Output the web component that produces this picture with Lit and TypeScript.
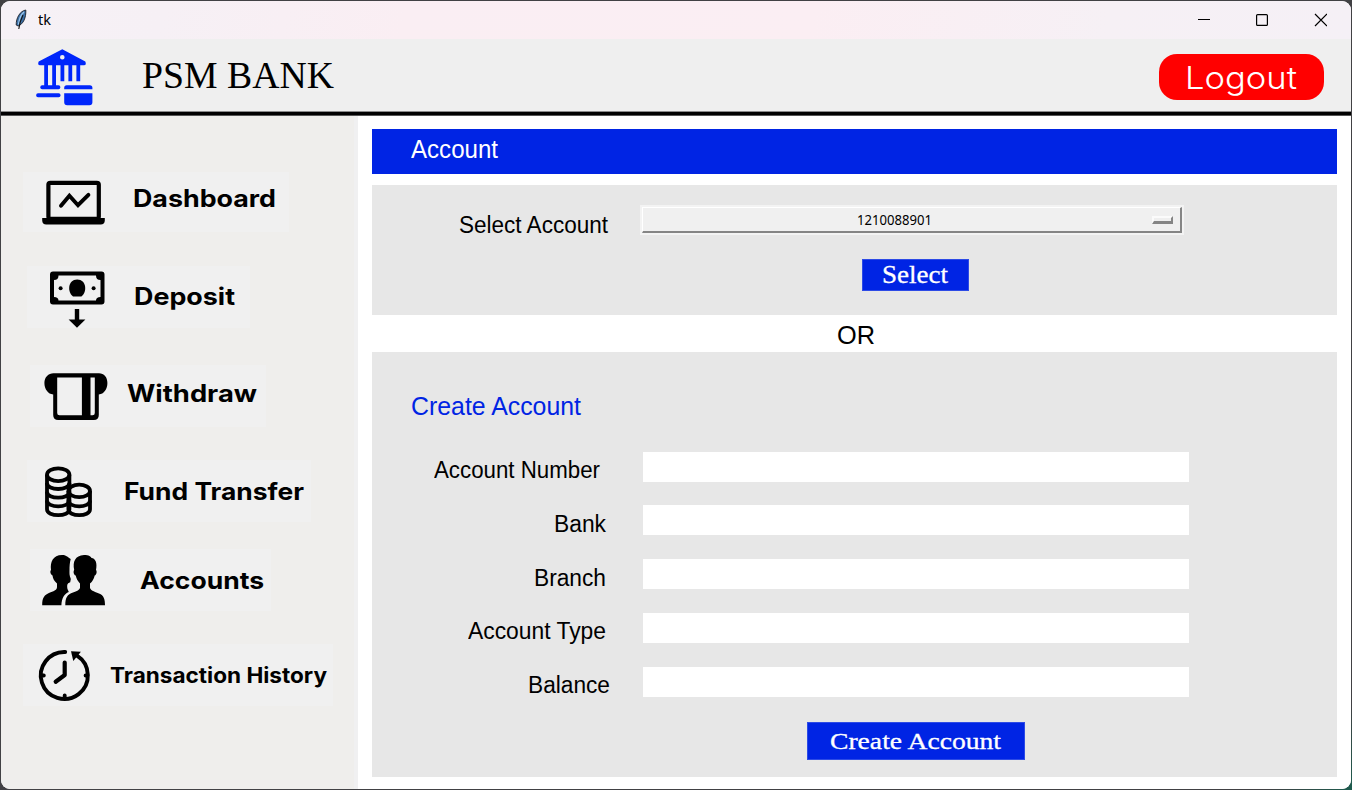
import { LitElement, html, svg, css } from "lit";
import { customElement, property } from "lit/decorators.js";

/* A single line of text, condensed or widened to an exact width. */
@customElement("fit-text")
class FitText extends LitElement {
  @property({ type: Number }) span = 0;
  static styles = css`
    :host { display: block; flex: none; white-space: nowrap; }
    .line { display: inline-block; transform-origin: 0 50%; }
  `;
  firstUpdated() {
    const line = this.renderRoot.querySelector(".line") as HTMLElement;
    const natural = line.getBoundingClientRect().width;
    this.style.width = this.span + "px";
    if (natural) line.style.transform = `scaleX(${this.span / natural})`;
  }
  render() {
    return html`<span class="line"><slot></slot></span>`;
  }
}

const icons: Record<string, any> = {
  dashboard: svg`
    <rect x="48.4" y="182.8" width="50.4" height="36" rx="2" fill="none" stroke="#000" stroke-width="4.2"/>
    <path d="M42.2 218h27.3c.6 1.300 1.400 1.600 2.600 1.600h4.600c1.200 0 2-.3 2.600-1.600h25.500v2.400c0 2.400-1.600 4-4 4H46.200c-2.400 0-4-1.600-4-4z"/>
    <path d="M61 205.800l8.400-10 8.600 9.400 10.400-10.400" fill="none" stroke="#000" stroke-width="3.900" stroke-linecap="round"/>`,
  deposit: svg`
    <path fill-rule="evenodd" d="M53 271.500h48.500q3 0 3 3v27q0 3-3 3H53q-3 0-3-3v-27q0-3 3-3zM58.500 275.500q0 4.500-4.500 4.500v17q4.500 0 4.500 3.500h37.500q0-3.500 4.500-3.500v-17q-4.500 0-4.500-4.500z"/>
    <circle cx="60.600" cy="288.200" r="2"/><circle cx="93.600" cy="288.200" r="2"/>
    <path d="M73 296.500c-6-4.500-5.200-17 4.200-17s10.200 12.500 4.200 17z"/>
    <path d="M74.800 309h4.400v10.400h6.200l-8.400 8.400-8.400-8.400h6.200z"/>`,
  withdraw: svg`
    <path fill-rule="evenodd" d="M53.500 373.200h45.500c5 0 8.400 3.800 8.400 9.800s-3.400 11.200-8.600 11.400v20.600q0 5-5 5H58.200q-5 0-5-5v-20.600c-5.200-.2-8.800-5.400-8.800-11.400s4-9.800 9.100-9.800zM57.200 377.500v35.500q0 2.200 2.200 2.200h22.500v-37.700zM90.500 377.500v37.700h2q2.300 0 2.300-2.200v-35.500z"/>`,
  fund: svg`
    <g fill="none" stroke="#000" stroke-width="3.800">
      <ellipse cx="58.200" cy="474.700" rx="11.200" ry="6.400"/>
      <path d="M47 474.700v34.500c0 8 22.400 8 22.400 0v-34.500"/>
      <path d="M47 483c0 8 22.400 8 22.400 0M47 491.700c0 8 22.400 8 22.400 0M47 500.400c0 8 22.400 8 22.400 0"/>
      <ellipse cx="79.200" cy="490.900" rx="10.800" ry="6.200"/>
      <path d="M68.400 491v18.200c0 8 21.600 8 21.600 0V491"/>
      <path d="M68.400 500.400c0 8 21.600 8 21.600 0"/>
    </g>`,
  accounts: svg`
    <path d="M65.300 605.300c0-8 2-10.800 7.700-12.800 4-1.500 6.500-2.500 7-4.500v-4.500c-2.500-2.500-3.500-5-4.300-8-2.200-.5-2.600-4.500-1.500-5.500-1.700-8 .8-14.500 9.800-15 5 0 7 1.500 7.500 3 4 .5 6 5 4.500 12 1.200 1 .7 5-1.300 5.500-.9 3.500-2.200 6-4.700 8v4.500c1 3 6 4 9 5.500 5 2 6 5.800 6 11.800z"/>
    <path d="M42.200 605.300c0-7.800 2-10.300 7.800-12.800 4-1.500 7-2.500 7-5.500v-3.500c-3-2.500-4-5-4.500-8-2.500-1.500-2.500-4.500-1.500-5.500-1-8 2-15 11-15 4 0 5.500 2 8.700 4-1 4-1.200 7-1.200 11 0 3-.3 5 1.300 9l-.6 3.200c-3.500.8-3.200 3.800-2.700 6.800l1.300 3c-4.800 2-7 6-7.400 13.300z"/>`,
  history: svg`
    <g fill="none" stroke="#000" stroke-width="3.900" stroke-linecap="round">
      <path d="M65.200 652A23.500 23.500 0 1 0 77 655.700"/>
      <path d="M64.700 662.500v12.500l-9 6.800" stroke-width="4.200" stroke-linejoin="round"/>
      <path d="M42 675.500h1.800M85.600 675.500h1.800M64.700 697v-1.500"/>
    </g>
    <path d="M71 651.300l9.900.4-7.600 9.300z"/>`,
};

const menu = [
  { id: "dashboard", text: "Dashboard", box: "23 172 110 60", span: 143 },
  { id: "deposit", text: "Deposit", box: "27 266 107 62", span: 101 },
  { id: "withdraw", text: "Withdraw", box: "30 365 97 62", span: 130 },
  { id: "fund", text: "Fund Transfer", box: "27 460 97 62", span: 180 },
  { id: "accounts", text: "Accounts", box: "30 549 110 62", span: 124 },
  { id: "history", text: "Transaction History", box: "23 644 87 62", span: 217 },
];

const fields = [
  { id: "number", text: "Account Number", span: 166 },
  { id: "bank", text: "Bank", span: 52 },
  { id: "branch", text: "Branch", span: 72 },
  { id: "type", text: "Account Type", span: 138 },
  { id: "balance", text: "Balance", span: 82 },
];

@customElement("app-root")
class AppRoot extends LitElement {
  static styles = css`
    :host { display: block; height: 790px; font-family: "Liberation Sans", sans-serif; color: #000; }
    * { box-sizing: border-box; }
    .backdrop { height: 790px; padding: 1px; background: linear-gradient(135deg, #414144 96%, #1d5c4e 100%); }
    .window { width: 1350px; height: 788px; border-radius: 9px; overflow: hidden; background: #fff; display: flex; flex-direction: column; }
    .titlebar { height: 38px; flex: none; display: flex; align-items: center; padding: 0 24px 0 12px; background: linear-gradient(100deg, #f6f1f6 0%, #f6f0f5 12%, #faeef3 30%, #fbeef3 60%, #f6f0f5 82%, #f5f0f6 100%); }
    .feather { width: 16px; height: 22px; }
    .title { font: 14px/18px "Noto Sans", sans-serif; margin: -1px auto 0 9px; }
    .controls { width: 134px; height: 20px; }
    .header { height: 77px; flex: none; display: flex; align-items: flex-start; background: linear-gradient(#efefef 72px, #8a8a8a 72px, #8a8a8a 73px, #000 73px, #000 76px, #555 76px); padding-left: 33px; }
    .logo { width: 65px; height: 70px; flex: none; }
    .brand { font: 38px/50px "Liberation Serif", serif; margin: 11px auto 0 43px; }
    .logout { width: 165px; height: 46px; margin: 15px 27.500px 0 0; padding: 0 0 0 26px; border: 0; border-radius: 18px; background: #f00; color: #fff; font: 300 31px/48px Inter, sans-serif; text-align: left; }
    .body { flex: 1; display: flex; min-height: 0; }
    .sidebar { width: 357px; flex: none; background: #efeeec; border-right: 4px solid #f0f0f1; display: flex; flex-direction: column; align-items: flex-start; padding-top: 56px; }
    .item { height: 62px; display: flex; background: #f0f0f0; font: 700 24px/28px Inter, sans-serif; flex: none; }
    .item svg { flex: none; }
    .dashboard { width: 266px; height: 60px; margin: 0 0 34px 22px; }
    .dashboard .caption { margin-top: 13px; }
    .deposit { width: 223px; margin: 0 0 37px 26px; }
    .deposit .caption { margin-top: 17px; }
    .withdraw { width: 236px; margin: 0 0 33px 29px; }
    .withdraw .caption { margin-top: 15px; }
    .fund { width: 284px; margin: 0 0 27px 26px; }
    .fund .caption { margin-top: 18px; }
    .accounts { width: 241px; margin: 0 0 33px 29px; }
    .accounts .caption { margin-top: 18px; }
    .history { width: 310px; margin: 0 0 0 22px; font-size: 21px; }
    .history .caption { margin-top: 18px; }
    .main { flex: 1; background: #fff; padding: 13px 14px 0 14px; display: flex; flex-direction: column; }
    .banner { height: 45px; flex: none; background: #0024e4; color: #fff; padding-left: 39px; font-size: 26px; line-height: 40px; }
    .pick { height: 130px; flex: none; margin-top: 11px; background: #e7e7e7; display: flex; flex-direction: column; }
    .pickrow { display: flex; padding-left: 87px; height: 50px; }
    .label { font-size: 23px; line-height: 30px; }
    .pick .label { margin-top: 25px; }
    .dropdown { width: 544px; height: 30px; margin: 20px 0 0 32px; padding: 2px; background: #f3f3f3; }
    .face { height: 26px; display: flex; align-items: center; background: #f0f0f0; border: solid; border-width: 1px 2px 2px 1px; border-color: #fff #858585 #858585 #fff; padding: 0 7px 0 214px; font: 15px/22px "Noto Sans", sans-serif; }
    .value { margin: -2px auto 0 0; }
    .knob { width: 21px; height: 8px; border: solid; border-width: 2px 2px 3px; border-color: #fbfbfb #858585 #858585 #fbfbfb; background: #efefef; }
    .action { border: 1px solid #2d4be6; background: #0024e4; color: #fff; font: 25px/30px "Liberation Serif", serif; padding: 0; text-align: left; -webkit-text-stroke: .3px #fff; }
    .select { width: 107px; height: 32px; margin: 24px 0 0 489.500px; padding-left: 19px; }
    .or { height: 37px; flex: none; padding-left: 465px; font-size: 26px; line-height: 40px; }
    .create { height: 425px; flex: none; background: #e7e7e7; }
    .subtitle { padding: 36px 0 0 39px; height: 99.500px; font-size: 26px; line-height: 36px; color: #0024e4; }
    .field { height: 53.800px; display: grid; grid-template-columns: 238px 546px; column-gap: 33px; }
    .field .label { justify-self: end; margin-top: 3.500px; }
    .number .label { margin-right: 10px; }
    .bank .label, .branch .label, .type .label { margin-right: 4px; }
    .entry { width: 546px; height: 30px; border: 0; padding: 0 6px; background: #fff; outline: none; font: 16px "Liberation Sans", sans-serif; }
    .submit { width: 218px; height: 38px; margin: 2px 0 0 435px; padding-left: 22px; line-height: 37px; font-size: 24px; display: block; }
  `;

  render() {
    return html`<div class="backdrop"><div class="window">
      <div class="titlebar">
        <svg class="feather" viewBox="13 8 16 22">
          <path d="M25.800 9C20 10 16 17 16.200 24l2 1c5-2 8-8 7.600-16z" fill="#3c6fa5" stroke="#1c1f28" stroke-width=".9"/>
          <path d="M24 11c-3 2.500-5 8-5.500 12.500" stroke="#9cc5ea" stroke-width="1.300" fill="none"/>
          <path d="M23 14c-2 4-3.500 8-4.200 14" stroke="#111" stroke-width="1.100" fill="none"/>
        </svg>
        <fit-text class="title" span="13">tk</fit-text>
        <svg class="controls" viewBox="1193 10 134 20" fill="none" stroke="#000" stroke-width="1.200">
          <path d="M1198 19.500h12"/>
          <rect x="1256.600" y="14.600" width="10.800" height="10.800" rx="1"/>
          <path d="M1315 14l12 12M1327 14l-12 12"/>
        </svg>
      </div>
      <div class="header">
        <svg class="logo" viewBox="34 39 65 70" fill="#0026fb">
          <path fill-rule="evenodd" d="M62.300 49.200l23 12.300q1.500 3.500-1.300 3.700H40q-2.800-.2-1.300-3.700zM62.300 55a2.300 2.300 0 1 0 0 4.600 2.300 2.300 0 0 0 0-4.600z"/>
          <path d="M44.200 64h3.800v22h-3.800zM52.200 64H56v22h-3.800zM60.500 64h3.800v17.300h-3.800zM68.400 64h3.800v17.300h-3.800zM76.400 64h3.800v17.300h-3.800z"/>
          <rect x="40.300" y="85.200" width="20" height="4" rx="1.800"/>
          <rect x="36.200" y="93.200" width="24.300" height="4" rx="1.800"/>
          <path d="M64.200 89.200v-1.500q0-2.500 2.500-2.500h23.200q2.500 0 2.500 2.500v1.500zM64.200 93.200h28.200v9q0 3-3 3H67.200q-3 0-3-3z"/>
        </svg>
        <fit-text class="brand" span="192">PSM BANK</fit-text>
        <button class="logout"><fit-text span="112">Logout</fit-text></button>
      </div>
      <div class="body">
        <nav class="sidebar">
          ${menu.map((m) => {
            const [, , w, h] = m.box.split(" ");
            return html`<div class="item ${m.id}">
              <svg viewBox=${m.box} width=${w} height=${h}>${icons[m.id]}</svg>
              <fit-text class="caption" span=${m.span}>${m.text}</fit-text>
            </div>`;
          })}
        </nav>
        <main class="main">
          <div class="banner"><fit-text span="87">Account</fit-text></div>
          <section class="pick">
            <div class="pickrow">
              <fit-text class="label" span="149">Select Account</fit-text>
              <div class="dropdown"><div class="face">
                <fit-text class="value" span="75">1210088901</fit-text>
                <span class="knob"></span>
              </div></div>
            </div>
            <button class="action select"><fit-text span="66">Select</fit-text></button>
          </section>
          <div class="or"><fit-text span="38">OR</fit-text></div>
          <section class="create">
            <div class="subtitle"><fit-text span="170">Create Account</fit-text></div>
            ${fields.map((f) => html`<div class="field ${f.id}">
              <fit-text class="label" span=${f.span}>${f.text}</fit-text>
              <input class="entry" aria-label=${f.text} />
            </div>`)}
            <button class="action submit"><fit-text span="171">Create Account</fit-text></button>
          </section>
        </main>
      </div>
    </div></div>`;
  }
}
